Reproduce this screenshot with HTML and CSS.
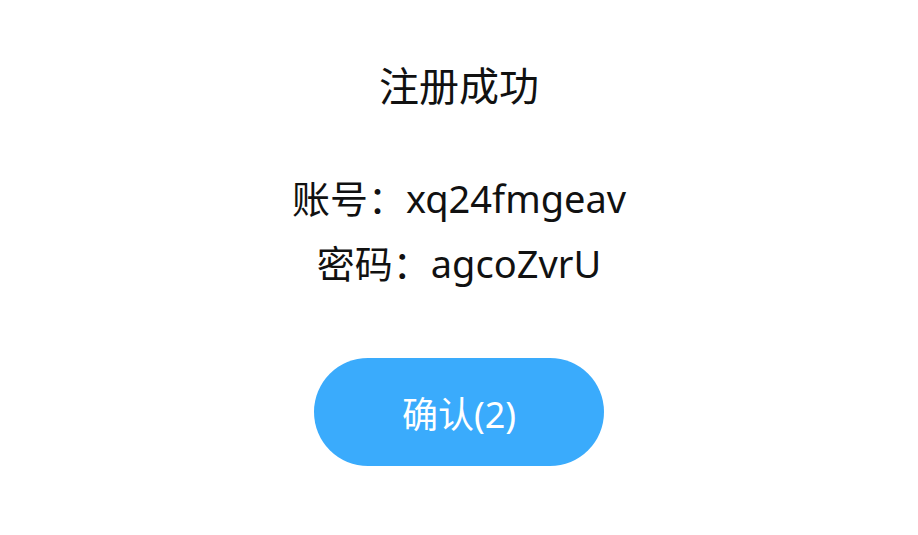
FILE: index.html
```html
<!DOCTYPE html>
<html lang="zh-CN">
  <head>
    <meta charset="UTF-8" />
    <meta name="viewport" content="width=device-width, initial-scale=1.0" />
    <title>注册成功</title>
    <link rel="stylesheet" href="styles.css">
  </head>
  <body>
    <div class="dialog">
      <h1 class="title">注册成功</h1>
      <!-- 账号密码 -->
      <div class="info">
        <p class="line">账号：xq24fmgeav</p>
        <p class="line">密码：agcoZvrU</p>
      </div>
      <button class="confirm" type="button">确认(2)</button>
    </div>
  </body>
</html>
```

FILE: styles.css
```css
body {
  margin: 0;
  background: #ffffff;
  font-family: "Noto Sans", "Noto Sans CJK SC", sans-serif;
  color: #111111;
}
.dialog {
  width: 918px;
  height: 535px;
  display: flex;
  flex-direction: column;
  align-items: center;
  padding-top: 58px;
  box-sizing: border-box;
}
.title {
  margin: 0;
  font-size: 40px;
  font-weight: 400;
  line-height: 56px;
}
.info {
  margin-top: 52px;
  display: flex;
  flex-direction: column;
  align-items: center;
}
.line {
  margin: 0;
  font-size: 38px;
  line-height: 65px;
}
.confirm {
  margin-top: 62px;
  width: 290px;
  height: 108px;
  border: none;
  border-radius: 54px;
  background: #3aabfc;
  color: #ffffff;
  font-family: inherit;
  font-size: 36px;
}
```
